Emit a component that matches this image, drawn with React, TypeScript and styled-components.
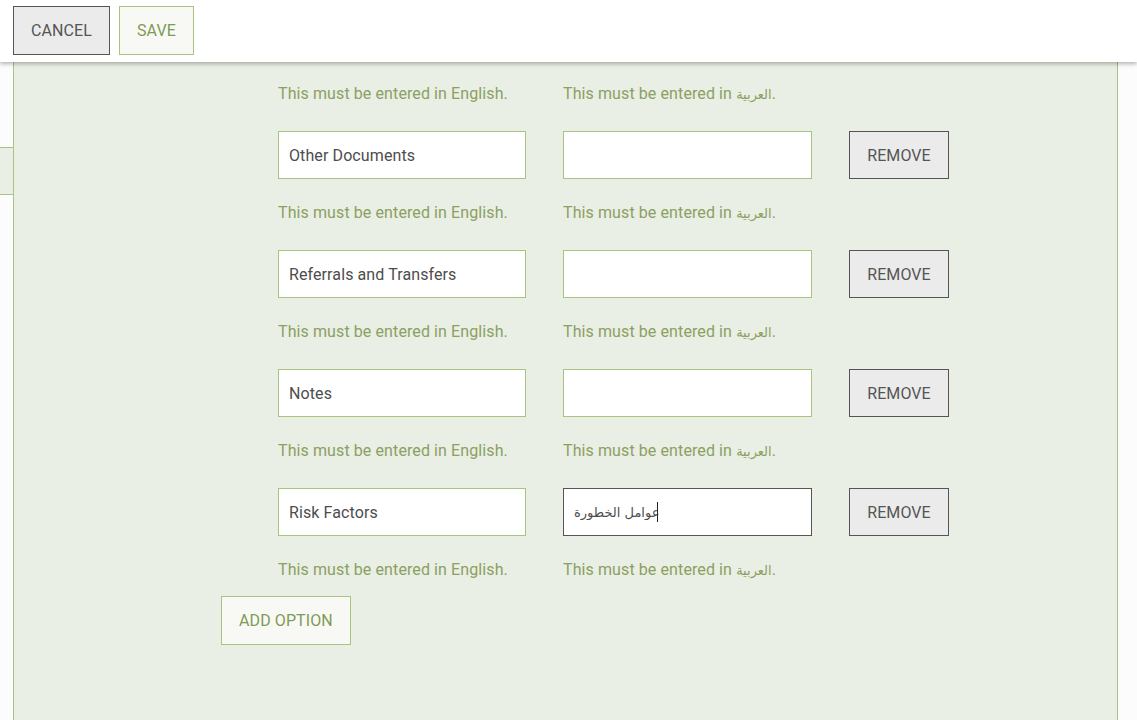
import React from 'react'
import styled, { createGlobalStyle } from 'styled-components'

interface OptionRow {
  english: string
  arabic: string
  focused?: boolean
}

const rows: OptionRow[] = [
  { english: 'Other Documents', arabic: '' },
  { english: 'Referrals and Transfers', arabic: '' },
  { english: 'Notes', arabic: '' },
  { english: 'Risk Factors', arabic: 'عوامل الخطورة', focused: true },
]

const GlobalStyle = createGlobalStyle`
  html, body {
    margin: 0;
    padding: 0;
    background: #fdfdfd;
    font-family: Roboto, "Liberation Sans", "DejaVu Sans", sans-serif;
    overflow: hidden;
  }
  * {
    box-sizing: border-box;
  }
`

/**
 * helper line under each pair of inputs
 */
const Helper = () => (
  <StyledHelperRow>
    <StyledHelper>This must be entered in English.</StyledHelper>
    <StyledHelper>
      This must be entered in <StyledArabic>العربية</StyledArabic>.
    </StyledHelper>
  </StyledHelperRow>
)

export default function App() {
  return (
    <>
      <GlobalStyle />
      <StyledToolbar>
        <StyledButton $variant="neutral">Cancel</StyledButton>
        <StyledButton $variant="primary">Save</StyledButton>
      </StyledToolbar>
      <StyledMain>
        <StyledSide>
          <StyledTab />
        </StyledSide>
        <StyledPanel>
          <StyledRows>
            <Helper />
            {rows.map((row) => (
              <React.Fragment key={row.english}>
                <StyledInputRow>
                  <StyledInput defaultValue={row.english} />
                  <StyledFieldWrap>
                    <StyledInput
                      defaultValue={row.arabic}
                      $focused={row.focused}
                      $arabic
                    />
                    {row.focused && <StyledCaret />}
                  </StyledFieldWrap>
                  <StyledButton $variant="neutral">Remove</StyledButton>
                </StyledInputRow>
                <Helper />
              </React.Fragment>
            ))}
          </StyledRows>
          <StyledAddWrap>
            <StyledButton $variant="primary">Add option</StyledButton>
          </StyledAddWrap>
        </StyledPanel>
        <StyledSide $right />
      </StyledMain>
    </>
  )
}

const StyledToolbar = styled.header`
  position: relative;
  z-index: 2;
  display: flex;
  gap: 9px;
  height: 62px;
  padding: 6px 13px 0;
  background: #ffffff;
  box-shadow: 0 2px 4px rgba(0, 0, 0, 0.28);
`

const StyledButton = styled.button<{ $variant: 'neutral' | 'primary' }>`
  height: 49px;
  padding: 0 17px;
  font-family: Roboto, "Liberation Sans", sans-serif;
  font-size: 16px;
  text-transform: uppercase;
  letter-spacing: 0.1px;
  cursor: pointer;
  border: 1px solid ${({ $variant }) => ($variant === 'neutral' ? '#555555' : '#a9c47e')};
  background: ${({ $variant }) => ($variant === 'neutral' ? '#ebebeb' : '#f8f9f4')};
  color: ${({ $variant }) => ($variant === 'neutral' ? '#555555' : '#7f9a57')};
`

const StyledMain = styled.main`
  display: flex;
  min-height: calc(100vh - 62px);
`

const StyledSide = styled.div<{ $right?: boolean }>`
  flex: 0 0 ${({ $right }) => ($right ? '19px' : '13px')};
  padding-top: 85px;
  background: #fcfcfc;
`

const StyledTab = styled.div`
  height: 48px;
  background: #e9efe4;
  border-top: 1px solid #a9c47e;
  border-bottom: 1px solid #a9c47e;
`

const StyledPanel = styled.section`
  flex: 1;
  padding: 22px 0 40px 207px;
  background: #e9efe4;
  border-left: 1px solid #a9c47e;
  border-right: 1px solid #a9c47e;
`

const StyledRows = styled.div`
  padding-left: 57px;
`

const StyledHelperRow = styled.div`
  display: grid;
  grid-template-columns: 248px 248px;
  column-gap: 37px;
  height: 20px;
  margin-bottom: 27px;
`

const StyledHelper = styled.p`
  margin: 0;
  height: 20px;
  line-height: 20px;
  font-size: 16px;
  letter-spacing: 0.1px;
  color: #8ba062;
  white-space: nowrap;
`

const StyledArabic = styled.span`
  font-family: "DejaVu Sans", sans-serif;
  font-size: 13px;
  line-height: 1;
  letter-spacing: 0;
`

const StyledInputRow = styled.div`
  display: grid;
  grid-template-columns: 248px 249px 100px;
  column-gap: 37px;
  height: 48px;
  margin-bottom: 24px;

  button {
    height: 48px;
    padding: 0;
  }
`

const StyledFieldWrap = styled.div`
  position: relative;
  display: flex;
`

const StyledInput = styled.input<{ $focused?: boolean; $arabic?: boolean }>`
  width: 100%;
  height: 48px;
  padding: 0 10px;
  font-family: ${({ $arabic }) =>
    $arabic ? '"DejaVu Sans", sans-serif' : 'Roboto, "Liberation Sans", sans-serif'};
  font-size: ${({ $arabic }) => ($arabic ? '13px' : '16px')};
  letter-spacing: 0.1px;
  color: #4d4d4d;
  background: #ffffff;
  border: 1px solid ${({ $focused }) => ($focused ? '#555555' : '#a9c47e')};
  outline: none;
`

const StyledCaret = styled.span`
  position: absolute;
  left: 94px;
  top: 14px;
  width: 1px;
  height: 20px;
  background: #222222;
`

const StyledAddWrap = styled.div`
  margin-top: -11px;

  button {
    padding: 0 17px;
  }
`
